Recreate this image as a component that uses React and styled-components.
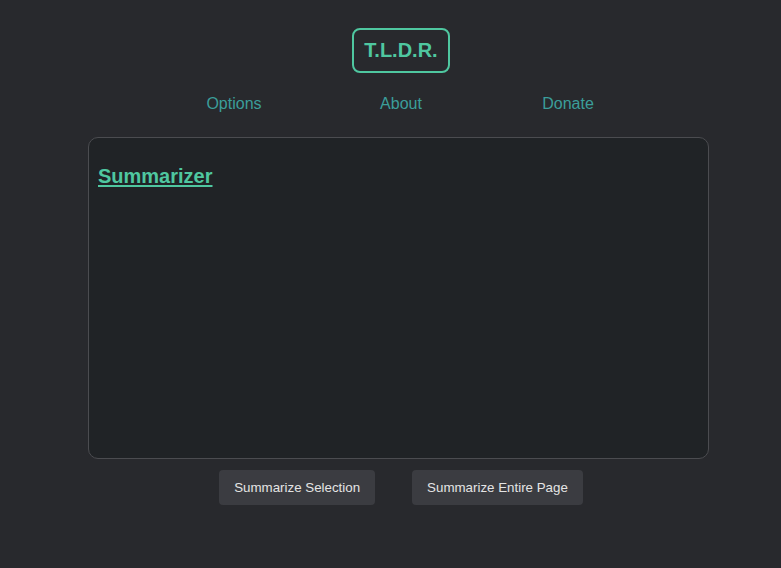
import styled, { createGlobalStyle } from "styled-components";

const Global = createGlobalStyle`
  html, body {
    margin: 0;
    padding: 0;
    background: #28292d;
    font-family: "Liberation Sans", Arial, sans-serif;
  }
`;

const Page = styled.div`
  min-height: 568px;
  display: flex;
  flex-direction: column;
  align-items: center;
  padding-left: 21px;
  box-sizing: border-box;
`;

const Logo = styled.div`
  margin-top: 28px;
  height: 45px;
  box-sizing: border-box;
  padding: 0 10px;
  display: flex;
  align-items: center;
  border: 2px solid #4fc7a0;
  border-radius: 8px;
  color: #4fc7a0;
  font-size: 20px;
  font-weight: bold;
`;

const Nav = styled.nav`
  margin-top: 19px;
  display: grid;
  grid-template-columns: repeat(3, 167px);
  height: 24px;
  align-items: center;
`;

const NavLink = styled.a`
  text-align: center;
  color: #3b9e9a;
  font-size: 16px;
  text-decoration: none;
`;

const Panel = styled.section`
  margin-top: 21px;
  margin-right: 5px;
  width: 621px;
  height: 322px;
  box-sizing: border-box;
  padding: 27px 9px;
  background: #202326;
  border: 1px solid #4b4c50;
  border-radius: 10px;
`;

const Title = styled.h2`
  margin: 0;
  font-size: 20px;
  line-height: 23px;
  font-weight: bold;
  color: #4fc7a0;
  text-decoration: underline;
  text-underline-offset: 2px;
`;

const Actions = styled.div`
  margin-top: 11px;
  display: flex;
  gap: 37px;
`;

const Button = styled.button`
  height: 35px;
  padding: 0 15px;
  border: none;
  border-radius: 4px;
  background: #3b3c41;
  color: #e4e4e4;
  font-family: "Liberation Sans", Arial, sans-serif;
  font-size: 13.33px;
`;

export default function App() {
  return (
    <>
      <Global />
      <Page>
        <Logo>T.L.D.R.</Logo>
        <Nav>
          <NavLink href="#options">Options</NavLink>
          <NavLink href="#about">About</NavLink>
          <NavLink href="#donate">Donate</NavLink>
        </Nav>
        <Panel>
          <Title>Summarizer</Title>
        </Panel>
        <Actions>
          <Button>Summarize Selection</Button>
          <Button>Summarize Entire Page</Button>
        </Actions>
      </Page>
    </>
  );
}
